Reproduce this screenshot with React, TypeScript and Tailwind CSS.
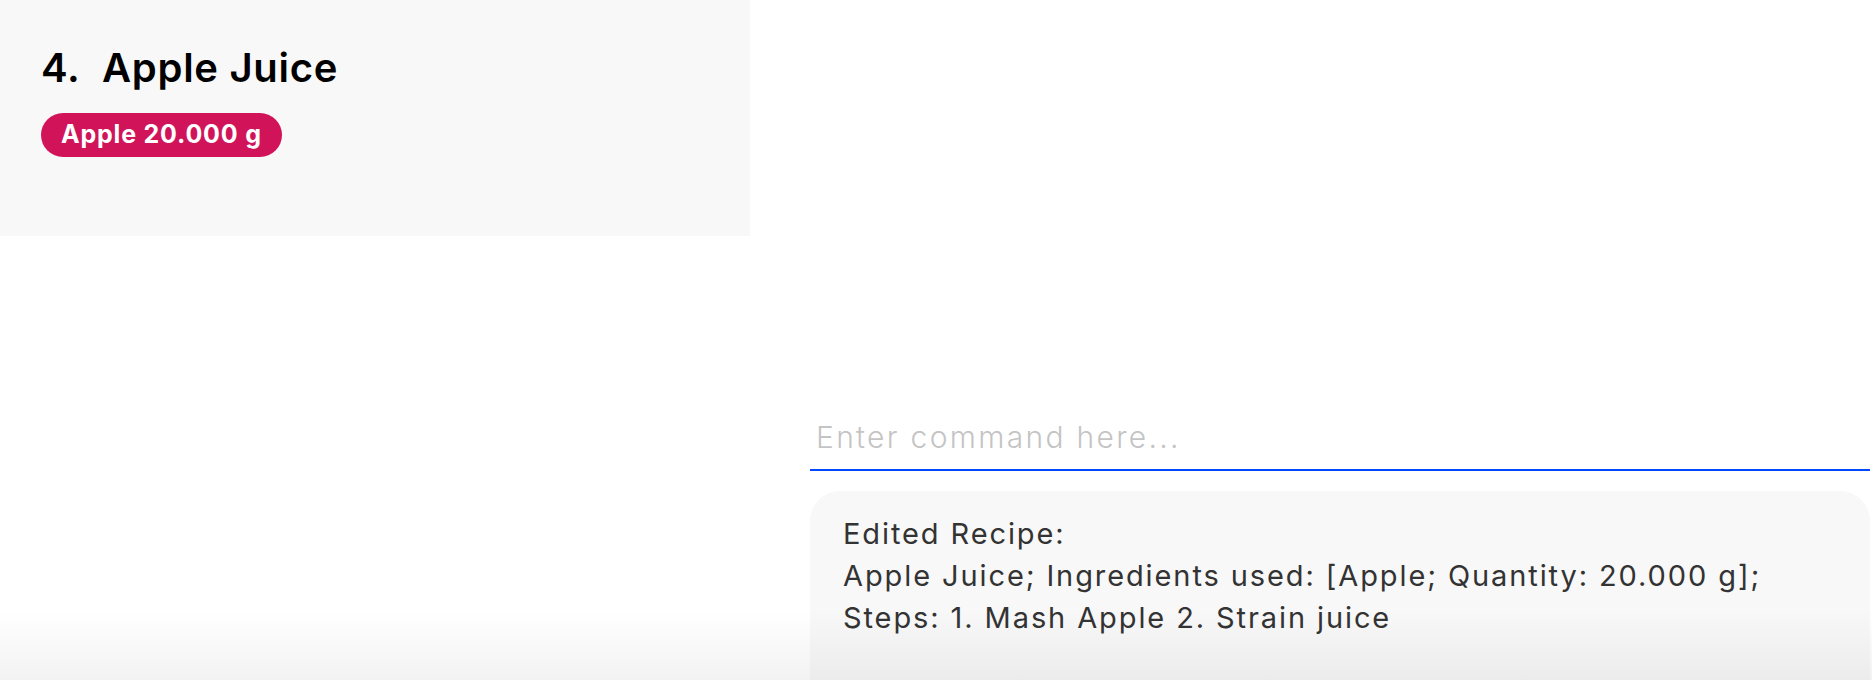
export default function App() {
  return (
    <div
      className="relative w-[1872px] h-[680px] overflow-hidden bg-white flex"
      style={{ fontFamily: 'Inter, "Open Sans", sans-serif' }}
    >
      {/* recipe list */}
      <div className="w-[750px] flex-none">
        <div className="h-[236px] bg-[#f8f8f8] pl-[41px] pt-[45px]">
          <h2 className="text-[40px] leading-[46px] font-semibold text-black tracking-[0.7px]">
            4.&nbsp; Apple Juice
          </h2>
          <div className="mt-[22px] flex">
            <span className="h-[44px] px-[20px] rounded-full bg-[#d1145a] text-white text-[25px] font-bold tracking-[0.8px] flex items-center">
              Apple 20.000 g
            </span>
          </div>
        </div>
      </div>

      {/* command box + result */}
      <div className="flex-1 pl-[60px] pr-[2px] flex flex-col">
        <div className="mt-[410px] h-[61px] pb-[5px] border-b-2 border-[#0047ff] flex items-center">
          <input
            className="w-full bg-transparent outline-none pl-[6px] text-[30px] font-light tracking-[2.3px] text-[#333] placeholder:text-[#c4c4c4]"
            placeholder="Enter command here..."
          />
        </div>
        <div className="mt-[20px] flex-1 rounded-t-[30px] bg-[#f8f8f8] pl-[33px] pr-[30px] pt-[22px]">
          <p className="text-[29px] leading-[42px] tracking-[1.9px] text-[#333]">
            Edited Recipe:
            <br />
            Apple Juice; Ingredients used: [Apple; Quantity: 20.000 g];
            <br />
            Steps: 1. Mash Apple 2. Strain juice
          </p>
        </div>
      </div>

      {/* bottom shade */}
      <div className="pointer-events-none absolute inset-x-0 bottom-0 h-[70px] bg-gradient-to-b from-transparent to-black/[0.05]" />
    </div>
  );
}
